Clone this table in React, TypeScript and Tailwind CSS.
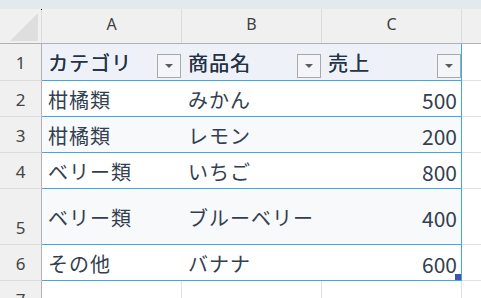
import React from "react";

type Row = { num: number; cat: string; item: string; sales: number; tall?: boolean };

const rows: Row[] = [
  { num: 2, cat: "柑橘類", item: "みかん", sales: 500 },
  { num: 3, cat: "柑橘類", item: "レモン", sales: 200 },
  { num: 4, cat: "ベリー類", item: "いちご", sales: 800 },
  { num: 5, cat: "ベリー類", item: "ブルーベリー", sales: 400, tall: true },
  { num: 6, cat: "その他", item: "バナナ", sales: 600 },
];

function FilterButton() {
  return (
    <div className="mr-[1px] mb-[2px] flex h-[24px] w-[24px] shrink-0 items-center justify-center border border-[#a9a9a9] bg-[#f3f5f8]">
      <svg width="8" height="4" viewBox="0 0 8 4">
        <path d="M0 0H8L4 4Z" fill="#5c5c5c" />
      </svg>
    </div>
  );
}

function RowHeader({ n, tall }: { n: number; tall?: boolean }) {
  return (
    <div
      className={`flex w-[42px] shrink-0 items-end justify-center border-r border-b border-r-[#b3b3b3] border-b-[#dcdcdc] bg-[#f0f0f0] pb-[8px] text-[17px] leading-none text-[#444] ${
        tall ? "h-[56px]" : "h-[36px]"
      }`}
      style={{ fontFamily: "'Noto Sans', 'Noto Sans CJK JP', sans-serif" }}
    >
      {n}
    </div>
  );
}

export default function App() {
  return (
    <div
      className="relative h-[298px] w-[481px] overflow-hidden bg-white text-[#333f50]"
      style={{ fontFamily: "'Noto Sans CJK JP', sans-serif" }}
    >
      {/* formula bar edge */}
      <div className="h-[9px] bg-[#e3eaed]" />

      {/* column letters */}
      <div
        className="flex h-[35px] border-b border-[#b1b1b1] bg-[#f0f0f0] text-[16px] text-[#404040]"
        style={{ fontFamily: "'Noto Sans', sans-serif" }}
      >
        <div className="relative w-[42px] shrink-0 border-r border-[#dcdcdc]">
          <svg className="absolute left-[10px] top-[4px]" width="29" height="29" viewBox="0 0 29 29">
            <path d="M28 0V28H0Z" fill="#dedede" />
          </svg>
          <span className="absolute right-[-1px] top-0 h-[1px] w-[1px] bg-black" />
        </div>
        {["A", "B", "C"].map((c) => (
          <div
            key={c}
            className="flex w-[140px] shrink-0 items-center justify-center border-r border-[#dcdcdc] pb-[4px]"
          >
            {c}
          </div>
        ))}
        <div className="flex-1" />
      </div>

      {/* table header row */}
      <div className="flex">
        <div
          className="flex h-[37px] w-[42px] shrink-0 items-end justify-center border-r border-b border-r-[#b3b3b3] border-b-[#dcdcdc] bg-[#f0f0f0] pb-[9px] text-[17px] leading-none text-[#444]"
          style={{ fontFamily: "'Noto Sans', sans-serif" }}
        >
          1
        </div>
        <div className="flex h-[37px] w-[420px] shrink-0 border-r border-b border-[#3ea8df] bg-[#eef2f8] text-[20px] font-normal leading-none tracking-[1px] text-[#263245]">
          {["カテゴリ", "商品名", "売上"].map((h, i) => (
            <div
              key={h}
              className={`flex items-end justify-between pl-[6px] ${i === 2 ? "w-[139px] [&>div]:mr-0" : "w-[140px]"}`}
            >
              <span className="mb-[7px] [text-shadow:0.3px_0_0_#263245]">{h}</span>
              <FilterButton />
            </div>
          ))}
        </div>
        <div className="h-[37px] flex-1 border-b border-[#e1e1e1]" />
      </div>

      {/* data rows */}
      {rows.map((r, idx) => (
        <div key={r.num} className="flex">
          <RowHeader n={r.num} tall={r.tall} />
          <div
            className={`flex w-[420px] shrink-0 items-center border-r border-b border-[#3ea8df] text-[20px] leading-none ${
              r.tall ? "h-[56px]" : "h-[36px]"
            } ${idx % 2 === 1 ? "bg-[#f7f9fb]" : "bg-white"}`}
          >
            <div className="w-[140px] pl-[6px] pt-[3px] tracking-[1px]">{r.cat}</div>
            <div className="w-[140px] pl-[6px] pt-[3px] tracking-[1px]">{r.item}</div>
            <div className="relative flex h-full w-[139px] items-center justify-end pr-[4px] pt-[3px] text-[21px]">
              {r.sales}
              {idx === rows.length - 1 && (
                <span className="absolute bottom-0 right-0 h-[6px] w-[6px] bg-[#4252b3]" />
              )}
            </div>
          </div>
          <div className={`flex-1 border-b border-[#e1e1e1] ${r.tall ? "h-[56px]" : "h-[36px]"}`} />
        </div>
      ))}

      {/* empty row 7 */}
      <div className="flex">
        <RowHeader n={7} />
        <div className="h-[36px] w-[140px] shrink-0 border-r border-[#e1e1e1]" />
        <div className="h-[36px] w-[140px] shrink-0 border-r border-[#e1e1e1]" />
        <div className="h-[36px] w-[140px] shrink-0 border-r border-[#e1e1e1]" />
        <div className="h-[36px] flex-1" />
      </div>
    </div>
  );
}
